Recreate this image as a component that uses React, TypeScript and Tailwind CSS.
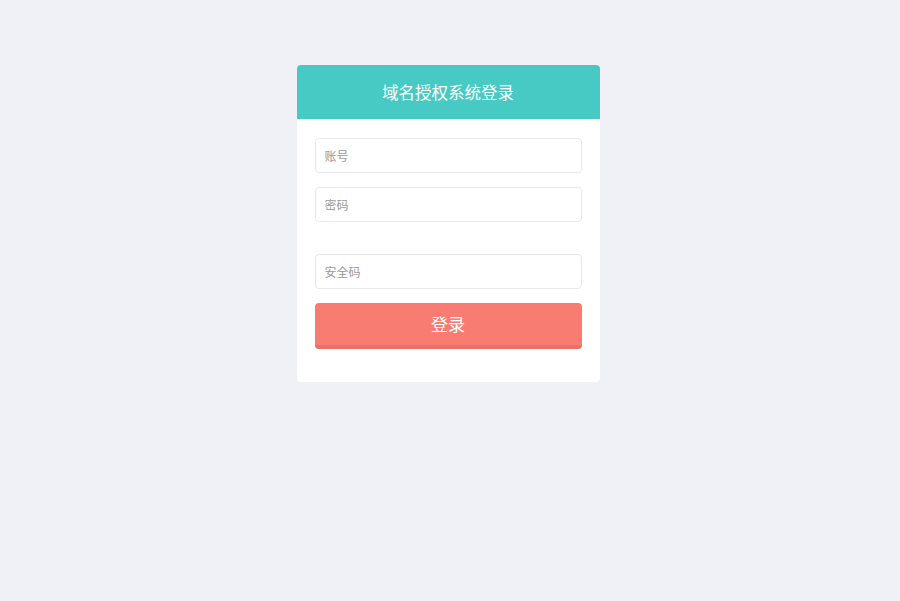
const inputClass =
  "h-[35px] w-full rounded-[4px] border border-[#e6e8ef] bg-white px-[9px] text-[12px] text-[#555] outline-none placeholder:text-[#999]";

export default function App() {
  return (
    <div
      className="min-h-[601px] w-full bg-[#f0f1f6] pt-[65px] pr-[4px]"
      style={{ fontFamily: '"Microsoft YaHei", "Noto Sans CJK SC", sans-serif' }}
    >
      <div className="mx-auto w-[303px] overflow-hidden rounded-[4px] bg-white">
        <div className="flex h-[54px] items-center justify-center bg-[#46cac3] text-[16.5px] text-white">
          域名授权系统登录
        </div>
        <form className="flex flex-col px-[18px] pt-[19px] pb-[33px]">
          <input className={inputClass} placeholder="账号" />
          <input className={`${inputClass} mt-[14px]`} type="password" placeholder="密码" />
          <input className={`${inputClass} mt-[32px]`} placeholder="安全码" />
          <button
            type="button"
            className="mt-[14px] h-[46px] w-full rounded-[4px] border-b-[4px] border-[#e96f67] bg-[#f97c72] text-[17px] text-white"
          >
            登录
          </button>
        </form>
      </div>
    </div>
  );
}
